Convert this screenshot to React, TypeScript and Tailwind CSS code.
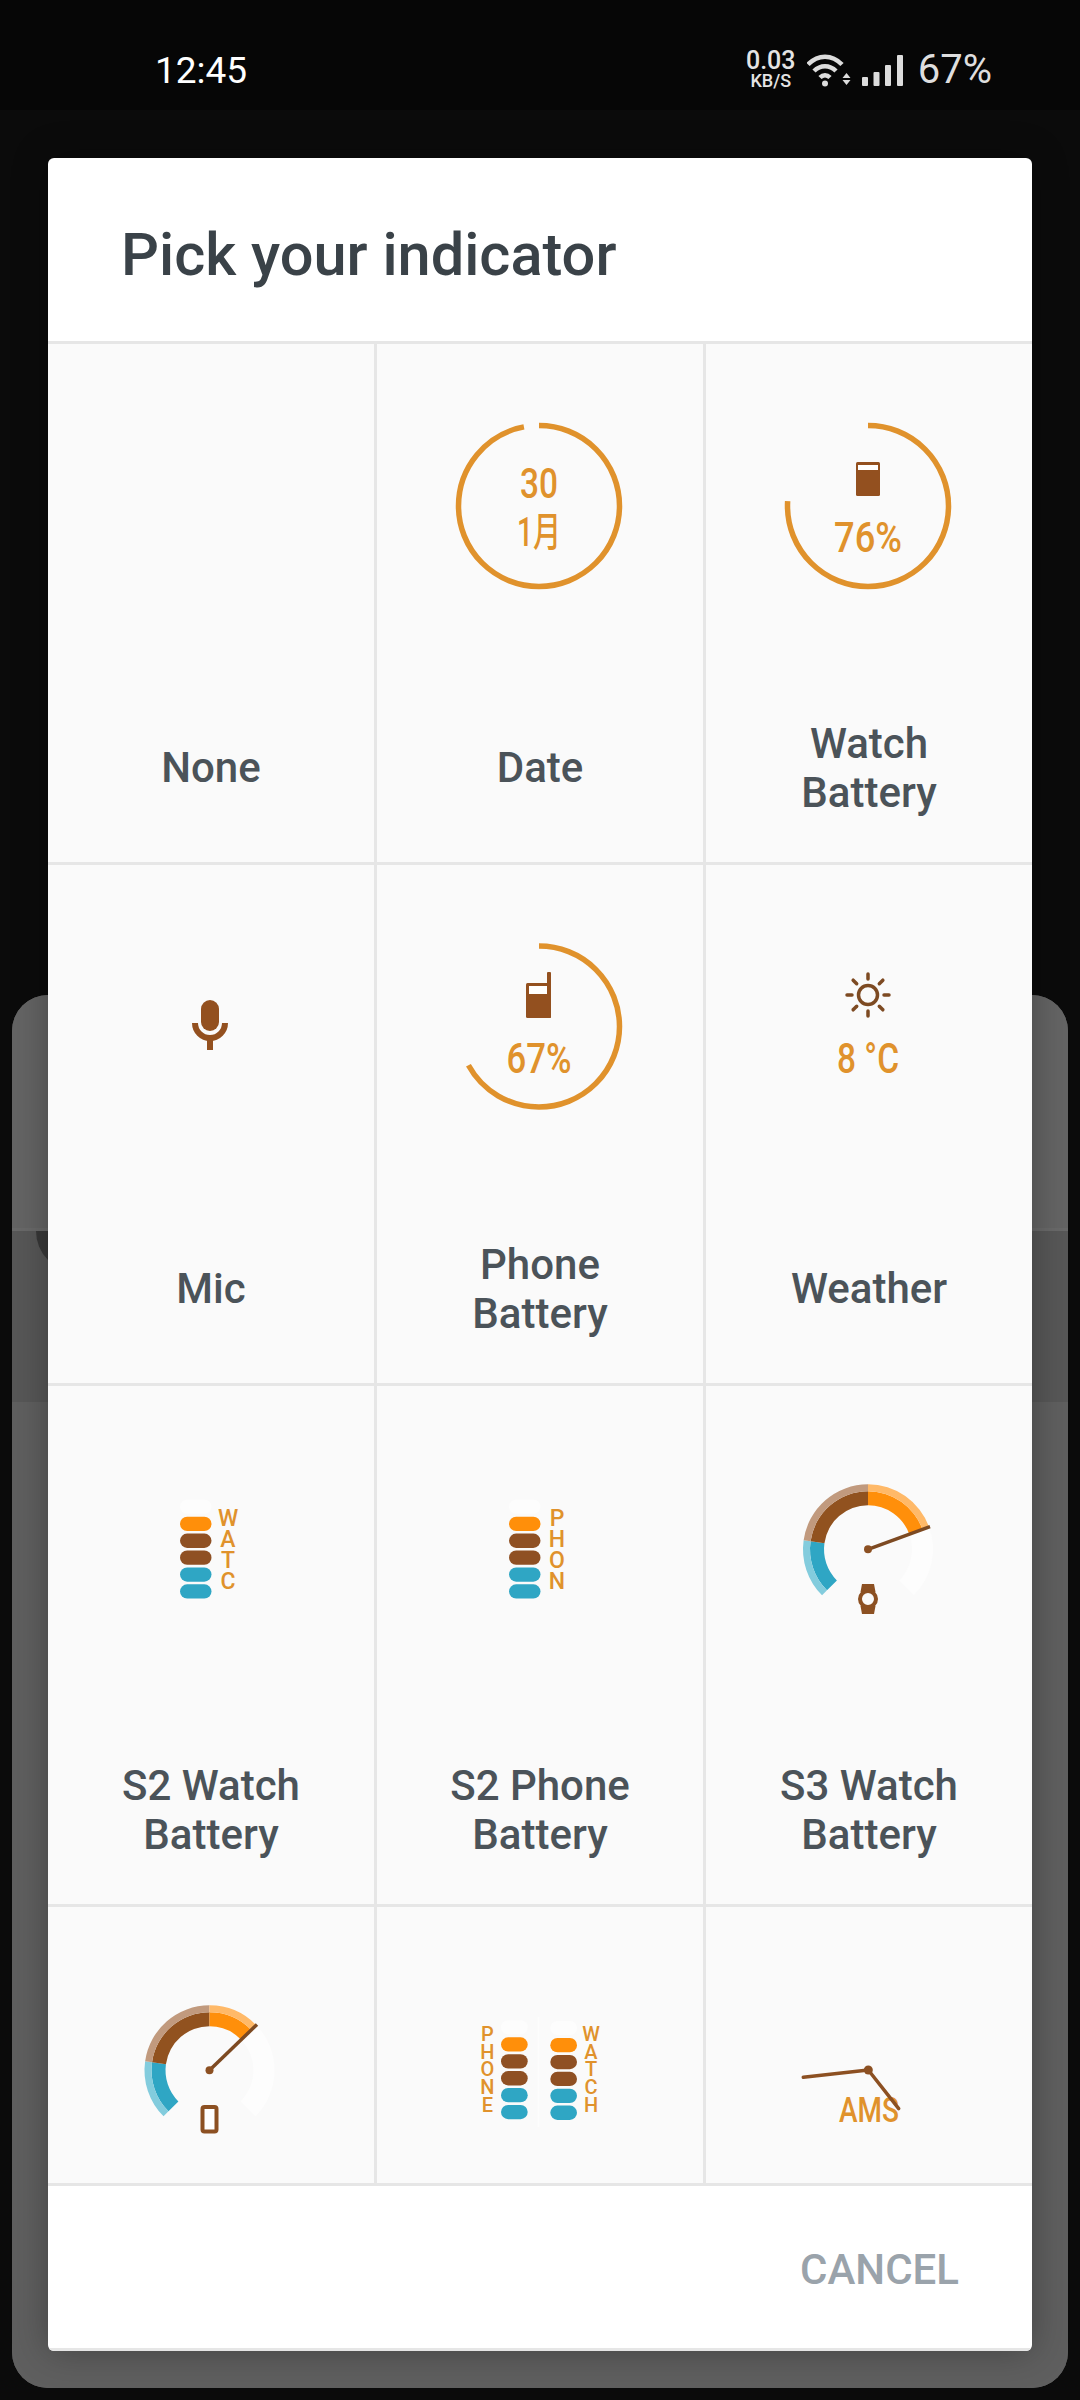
import React from 'react';

const ORANGE = '#e0922c';
const BROWN = '#8c5022';
const DARK_BROWN = '#7d4a22';
const SOLID_BROWN = '#93501f';
const BLUE = '#2fa6c4';
const AMBER = '#ff8f0a';
const GHOST = '#fdfdfd';

function polar(cx: number, cy: number, r: number, deg: number) {
  const a = ((deg - 90) * Math.PI) / 180;
  return [cx + r * Math.cos(a), cy + r * Math.sin(a)];
}

function band(cx: number, cy: number, r1: number, r2: number, from: number, to: number) {
  const [ax, ay] = polar(cx, cy, r2, from);
  const [bx, by] = polar(cx, cy, r2, to);
  const [dx, dy] = polar(cx, cy, r1, to);
  const [ex, ey] = polar(cx, cy, r1, from);
  const big = to - from > 180 ? 1 : 0;
  return `M${ax} ${ay}A${r2} ${r2} 0 ${big} 1 ${bx} ${by}L${dx} ${dy}A${r1} ${r1} 0 ${big} 0 ${ex} ${ey}Z`;
}

function IconBox({ children }: { children?: React.ReactNode }) {
  return (
    <svg viewBox="1 0 326 326" className="w-[326px] h-[326px] mx-auto shrink-0 font-[Roboto,'Noto_Sans_CJK_SC',sans-serif]">
      {children}
    </svg>
  );
}

function Ring({ cy, percent }: { cy: number; percent: number }) {
  return (
    <circle
      cx={163}
      cy={cy}
      r={80.5}
      fill="none"
      stroke={ORANGE}
      strokeWidth={5.5}
      pathLength={100}
      strokeDasharray={`${percent} 100`}
      transform={`rotate(-90 163 ${cy})`}
    />
  );
}

function Label({ x = 163, y, width, size = 42, children }: { x?: number; y: number; width: number; size?: number; children: string }) {
  return (
    <text x={x} y={y} fontSize={size} fontWeight={500} fill={ORANGE} textAnchor="middle" textLength={width} lengthAdjust="spacingAndGlyphs">
      {children}
    </text>
  );
}

function DateIcon() {
  return (
    <IconBox>
      <Ring cy={162} percent={97} />
      <Label y={154} width={38}>30</Label>
      <Label y={202} width={44} size={40}>1月</Label>
    </IconBox>
  );
}

function WatchBatteryIcon() {
  return (
    <IconBox>
      <Ring cy={162} percent={76} />
      <rect x={151} y={118} width={24} height={34} rx={1.5} fill={SOLID_BROWN} />
      <rect x={153} y={121} width={20} height={5} fill="#fff" />
      <Label y={208} width={68}>76%</Label>
    </IconBox>
  );
}

function MicIcon() {
  return (
    <IconBox>
      <rect x={154} y={135} width={18} height={31} rx={9} fill={SOLID_BROWN} />
      <path d="M148 158a15 15 0 0 0 30 0" fill="none" stroke={SOLID_BROWN} strokeWidth={6} />
      <rect x={160} y={172} width={6} height={13} fill={SOLID_BROWN} />
    </IconBox>
  );
}

function PhoneBatteryIcon() {
  return (
    <IconBox>
      <Ring cy={161.5} percent={67} />
      <rect x={150} y={118} width={25} height={35} rx={1.5} fill={SOLID_BROWN} />
      <rect x={171} y={107} width={4} height={46} rx={1} fill={SOLID_BROWN} />
      <rect x={153} y={121} width={18} height={8} fill="#fff" />
      <Label y={208} width={65}>67%</Label>
    </IconBox>
  );
}

function WeatherIcon() {
  const rays = [0, 45, 90, 135, 180, 225, 270, 315];
  return (
    <IconBox>
      <circle cx={163} cy={130} r={9.5} fill="none" stroke={DARK_BROWN} strokeWidth={3.5} />
      {rays.map((deg) => {
        const [x1, y1] = polar(163, 130, 16, deg);
        const [x2, y2] = polar(163, 130, 21, deg);
        return <line key={deg} x1={x1} y1={y1} x2={x2} y2={y2} stroke={DARK_BROWN} strokeWidth={3.5} strokeLinecap="round" />;
      })}
      <Label y={208} width={62}>8 °C</Label>
    </IconBox>
  );
}

function Pills({ x, y, width }: { x: number; y: number; width: number }) {
  const colors = [AMBER, '#8f5023', '#8f5023', BLUE, BLUE];
  return (
    <>
      <rect x={x} y={y - 17} width={width} height={14} rx={7} fill={GHOST} />
      {colors.map((c, i) => (
        <rect key={i} x={x} y={y + i * 16.9} width={width} height={14.3} rx={7.15} fill={c} />
      ))}
    </>
  );
}

function BarLetters({ x, y, pitch, size, word }: { x: number; y: number; pitch: number; size: number; word: string }) {
  return (
    <>
      {word.split('').map((ch, i) => (
        <text key={i} x={x} y={y + i * pitch} fontSize={size} fontWeight={500} fill={ORANGE} textAnchor="middle">
          {ch}
        </text>
      ))}
    </>
  );
}

function S2Icon({ word }: { word: string }) {
  return (
    <IconBox>
      <Pills x={133} y={130.7} width={31.5} />
      <BarLetters x={181} y={140} pitch={21} size={23} word={word} />
    </IconBox>
  );
}

function Gauge({ cx, cy, end }: { cx: number; cy: number; end: number }) {
  const [nx, ny] = polar(cx, cy, 66, end);
  return (
    <>
      <path d={band(cx, cy, 44, 65, end, 135)} fill={GHOST} />
      <path d={band(cx, cy, 44, 58, -135, -82)} fill={BLUE} />
      <path d={band(cx, cy, 58, 65, -135, -82)} fill="#83ccdd" />
      <path d={band(cx, cy, 44, 58, -82, 0)} fill="#91521f" />
      <path d={band(cx, cy, 58, 65, -82, 0)} fill="#c19a7e" />
      <path d={band(cx, cy, 44, 58, 0, end)} fill={AMBER} />
      <path d={band(cx, cy, 58, 65, 0, end)} fill="#ffb968" />
      <line x1={cx} y1={cy} x2={nx} y2={ny} stroke={DARK_BROWN} strokeWidth={3.5} />
      <circle cx={cx} cy={cy} r={4} fill={BROWN} />
    </>
  );
}

function S3WatchIcon() {
  return (
    <IconBox>
      <Gauge cx={163} cy={163.3} end={70} />
      <path d="M157 198h12l1.500 8h-15ZM155.500 220h15l-1.500 8h-12Z" fill={BROWN} />
      <circle cx={163} cy={213} r={8} fill="#fafafa" stroke={BROWN} strokeWidth={4} />
    </IconBox>
  );
}

function S3PhoneIcon() {
  return (
    <IconBox>
      <Gauge cx={162.5} cy={163.3} end={46} />
      <rect x={155.5} y={200} width={14} height={24.5} rx={2} fill="#fff" stroke={BROWN} strokeWidth={4} />
    </IconBox>
  );
}

function DualBarsIcon() {
  return (
    <IconBox>
      <BarLetters x={111.3} y={134} pitch={17.7} size={20} word="PHONE" />
      <Pills x={125} y={130.3} width={26.7} />
      <line x1={162.5} y1={110} x2={162.5} y2={220} stroke={GHOST} strokeWidth={2} />
      <Pills x={174.3} y={131} width={26.7} />
      <BarLetters x={215} y={134} pitch={17.7} size={20} word="WATCH" />
    </IconBox>
  );
}

function AmsIcon() {
  return (
    <IconBox>
      <Label x={164} y={214.7} width={60} size={35}>AMS</Label>
      <line x1={163.3} y1={163} x2={98.3} y2={170.3} stroke={BROWN} strokeWidth={3.5} strokeLinecap="round" />
      <line x1={163.3} y1={163} x2={193.7} y2={201.7} stroke={BROWN} strokeWidth={3.5} strokeLinecap="round" />
      <circle cx={163.3} cy={163} r={4.5} fill={BROWN} />
    </IconBox>
  );
}

const cells: { icon: React.ReactNode; lines: string[] }[] = [
  { icon: <IconBox />, lines: ['None'] },
  { icon: <DateIcon />, lines: ['Date'] },
  { icon: <WatchBatteryIcon />, lines: ['Watch', 'Battery'] },
  { icon: <MicIcon />, lines: ['Mic'] },
  { icon: <PhoneBatteryIcon />, lines: ['Phone', 'Battery'] },
  { icon: <WeatherIcon />, lines: ['Weather'] },
  { icon: <S2Icon word="WATC" />, lines: ['S2 Watch', 'Battery'] },
  { icon: <S2Icon word="PHON" />, lines: ['S2 Phone', 'Battery'] },
  { icon: <S3WatchIcon />, lines: ['S3 Watch', 'Battery'] },
  { icon: <S3PhoneIcon />, lines: [] },
  { icon: <DualBarsIcon />, lines: [] },
  { icon: <AmsIcon />, lines: [] },
];

function StatusIcons() {
  return (
    <div className="flex items-center">
      <div className="flex flex-col items-center w-[50px] text-[#e4e4e4] font-medium">
        <span className="text-[25px] leading-[20px]">0.03</span>
        <span className="text-[18px] leading-[16px] mt-[2px]">KB/S</span>
      </div>
      <svg viewBox="0 0 44 33" className="w-[44px] h-[33px] ml-[11px]">
        <g fill="none" stroke="#dcdcdc" strokeWidth={4.5}>
          <path d="M1 10.500C11 0 25 0 35 10.500" />
          <path d="M7 17C13.500 10.500 22.500 10.500 29 17" />
          <path d="M13 23.500C16 20.500 20 20.500 23 23.500" />
        </g>
        <circle cx={18} cy={29.500} r={3} fill="#dcdcdc" />
        <path d="M39.500 19l4 5h-8ZM35.500 26h8l-4 5Z" fill="#dcdcdc" />
      </svg>
      <svg viewBox="0 0 41 31" className="w-[41px] h-[31px] ml-[11px]">
        <g fill="#dcdcdc">
          <rect x={0} y={22} width={6} height={9} rx={1} />
          <rect x={11.500} y={17} width={6} height={14} rx={1} />
          <rect x={23} y={10} width={6} height={21} rx={1} />
          <rect x={35} y={0} width={6} height={31} rx={1} />
        </g>
      </svg>
      <span className="text-[40px] leading-none text-[#dedede] ml-[15px]">67%</span>
    </div>
  );
}

export default function App() {
  return (
    <div className="relative w-[1080px] h-[2400px] bg-[#0b0b0b] overflow-hidden font-[Roboto,sans-serif]">
      <div className="relative z-10 h-[110px] bg-[#060606] flex items-center justify-between pl-[155px] pr-[88px] pt-[30px]">
        <span className="text-[37px] leading-none text-white">12:45</span>
        <StatusIcons />
      </div>

      {/* sheet dimmed behind the dialog */}
      <div className="mt-[885px] mx-3 h-[1393px] rounded-[36px] bg-[#616161] overflow-hidden flex flex-col">
        <div className="h-[233px] shrink-0 bg-[#646464]" />
        <div className="relative h-[174px] shrink-0 bg-[#575757] border-t-[3px] border-[#696969] overflow-hidden">
          <div className="absolute left-6 -top-[41px] w-[82px] h-[82px] rounded-full bg-[#383838]" />
        </div>
        <div className="flex-1 bg-[#5f5f5f]" />
      </div>

      <div className="absolute left-12 top-[158px] w-[984px] rounded-[6px] overflow-hidden bg-white shadow-[0_0_36px_rgba(0,0,0,0.3)]">
        <div className="h-[186px] border-b-[3px] border-[#e6e6e6] pl-[73px] pt-[62px]">
          <h1 className="text-[59.5px] leading-[70px] font-medium text-[#3a4248]">Pick your indicator</h1>
        </div>
        <div className="h-[1839px] overflow-hidden">
          <div className="grid grid-cols-[329px_329px_326px]">
            {cells.map((cell, i) => (
              <div
                key={i}
                className={`h-[521px] flex flex-col bg-[#fafafa] border-b-[3px] border-[#e6e6e6] ${i % 3 === 2 ? '' : 'border-r-[3px]'}`}
              >
                {cell.icon}
                <div className="flex-1 flex flex-col items-center justify-center pt-[3px] text-[42px] leading-[49px] font-medium text-[#4b5359]">
                  {cell.lines.map((line) => (
                    <span key={line}>{line}</span>
                  ))}
                </div>
              </div>
            ))}
          </div>
        </div>
        <div className="h-[168px] border-y-[3px] border-[#e6e6e6] flex items-center justify-end pr-[73px] pt-[6px]">
          <span className="text-[42px] font-medium leading-none text-[#9aa3ab]">CANCEL</span>
        </div>
      </div>
    </div>
  );
}
